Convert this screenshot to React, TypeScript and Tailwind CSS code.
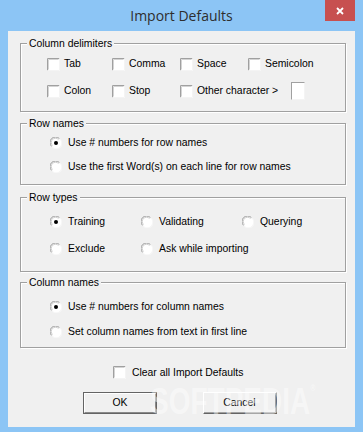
import React from 'react';

const CheckBox = () => (
  <svg width="13" height="13" viewBox="0 0 13 13" className="shrink-0">
    <rect x="0" y="0" width="13" height="13" fill="#ffffff" />
    <path d="M0.5 12.5 V0.5 H12.5" stroke="#a0a0a0" fill="none" />
    <path d="M1.5 11.5 V1.5 H11.5" stroke="#d4d4d4" fill="none" />
    <path d="M0.5 12.5 H12.5 V0.5" stroke="#f4f4f4" fill="none" />
  </svg>
);

const Radio = ({ on = false }: { on?: boolean }) => (
  <svg width="12" height="12" viewBox="0 0 12 12" className="shrink-0">
    <circle cx="6" cy="6" r="5.5" fill="#ffffff" />
    <path d="M1.6 9.4 A5 5 0 0 1 9.4 1.6" stroke="#9a9a9a" strokeWidth="1" fill="none" />
    <path d="M2.5 8.5 A4 4 0 0 1 8.5 2.5" stroke="#cfcfcf" strokeWidth="1" fill="none" />
    <path d="M10.4 2.6 A5 5 0 0 1 2.6 10.4" stroke="#f8f8f8" strokeWidth="1" fill="none" />
    {on && <circle cx="6" cy="6" r="2" fill="#000000" />}
  </svg>
);

const Check = ({ label }: { label: string }) => (
  <div className="flex items-center h-[18px] gap-[4px] whitespace-nowrap">
    <CheckBox />
    <span>{label}</span>
  </div>
);

const Opt = ({ label, on = false }: { label: string; on?: boolean }) => (
  <div className="flex items-center h-[16px] gap-[6px] whitespace-nowrap">
    <Radio on={on} />
    <span>{label}</span>
  </div>
);

const Group = ({ title, mt, body, children }: { title: string; mt: string; body: string; children: React.ReactNode }) => (
  <div className={`ml-[12px] w-[326px] border border-[#a0a0a0] shadow-[inset_1px_1px_0_#fff,1px_1px_0_#fff] ${mt}`}>
    <div className="-mt-[7px] -mb-[6px] ml-[6px] px-[2px] w-fit bg-[#f0f0f0] leading-[13px]">{title}</div>
    <div className={body}>{children}</div>
  </div>
);

export default function App() {
  return (
    <div className="w-[363px] h-[432px] overflow-hidden bg-[#8cc5f5] flex flex-col font-['Liberation_Sans',Arial,sans-serif] text-[10.4px] text-black">
      {/* title bar */}
      <div className="relative h-[31px] flex items-center justify-center">
        <span className="font-['Open_Sans',sans-serif] text-[14px] text-[#2e2e2e] -mt-[1px]">Import Defaults</span>
        <div className="absolute top-0 right-[8px] w-[30px] h-[21px] bg-[#c75050] flex items-center justify-center">
          <svg width="8" height="8" viewBox="0 0 8 8">
            <path d="M1 1 L7 7 M7 1 L1 7" stroke="#fff" strokeWidth="1.8" />
          </svg>
        </div>
      </div>

      {/* client area */}
      <div className="relative mx-[8px] mb-[5px] flex-1 bg-[#f0f0f0] flex flex-col overflow-hidden">
        <Group title="Column delimiters" mt="mt-[12px]" body="pt-[11px] pb-[11px] pl-[26px] grid grid-cols-[65px_68px_68px_auto] gap-y-[9px]">
          <Check label="Tab" />
          <Check label="Comma" />
          <Check label="Space" />
          <Check label="Semicolon" />
          <Check label="Colon" />
          <Check label="Stop" />
          <div className="col-span-2 flex items-center h-[18px] gap-[4px] whitespace-nowrap">
            <CheckBox />
            <span>Other character &gt;</span>
            <div className="ml-[9px] w-[14px] h-[18px] bg-white border-t border-l border-r border-b border-t-[#a0a0a0] border-l-[#a0a0a0] border-r-[#f4f4f4] border-b-[#f4f4f4]" />
          </div>
        </Group>

        <Group title="Row names" mt="mt-[11px]" body="pt-[11px] pb-[9px] pl-[29px] flex flex-col gap-[8px]">
          <Opt label="Use # numbers for row names" on />
          <Opt label="Use the first Word(s) on each line for row names" />
        </Group>

        <Group title="Row types" mt="mt-[12px]" body="pt-[16px] pb-[14px] pl-[29px] grid grid-cols-[91px_101px_auto] gap-y-[11px]">
          <Opt label="Training" on />
          <Opt label="Validating" />
          <Opt label="Querying" />
          <Opt label="Exclude" />
          <Opt label="Ask while importing" />
        </Group>

        <Group title="Column names" mt="mt-[10px]" body="pt-[16px] pb-[7px] pl-[29px] flex flex-col gap-[9px]">
          <Opt label="Use # numbers for column names" on />
          <Opt label="Set column names from text in first line" />
        </Group>

        <div className="mt-[18px] pl-[105px] flex items-center h-[13px] gap-[6px] whitespace-nowrap">
          <CheckBox />
          <span>Clear all Import Defaults</span>
        </div>

        <div className="mt-[13px] pl-[75px] flex gap-[46px]">
          <button className="w-[74px] h-[22px] border border-[#646464] bg-[#f0f0f0] flex">
            <span className="w-full h-full flex items-center justify-center border-t border-l border-r border-b border-t-white border-l-white border-r-[#8a8a8a] border-b-[#8a8a8a]">OK</span>
          </button>
          <button className="w-[74px] h-[22px] bg-[#f0f0f0] border-t border-l border-r border-b border-t-white border-l-white border-r-[#646464] border-b-[#646464] flex">
            <span className="w-full h-full flex items-center justify-center border-r border-b border-r-[#a0a0a0] border-b-[#a0a0a0]">Cancel</span>
          </button>
        </div>

        {/* watermark */}
        <div className="absolute left-[142px] top-[352px] pointer-events-none font-['Liberation_Sans',sans-serif] font-bold text-[28px] leading-none text-white/45 scale-y-[1.35] origin-top whitespace-nowrap">
          SOFTPEDIA<span className="align-top text-[7px]">®</span>
        </div>
      </div>
    </div>
  );
}
